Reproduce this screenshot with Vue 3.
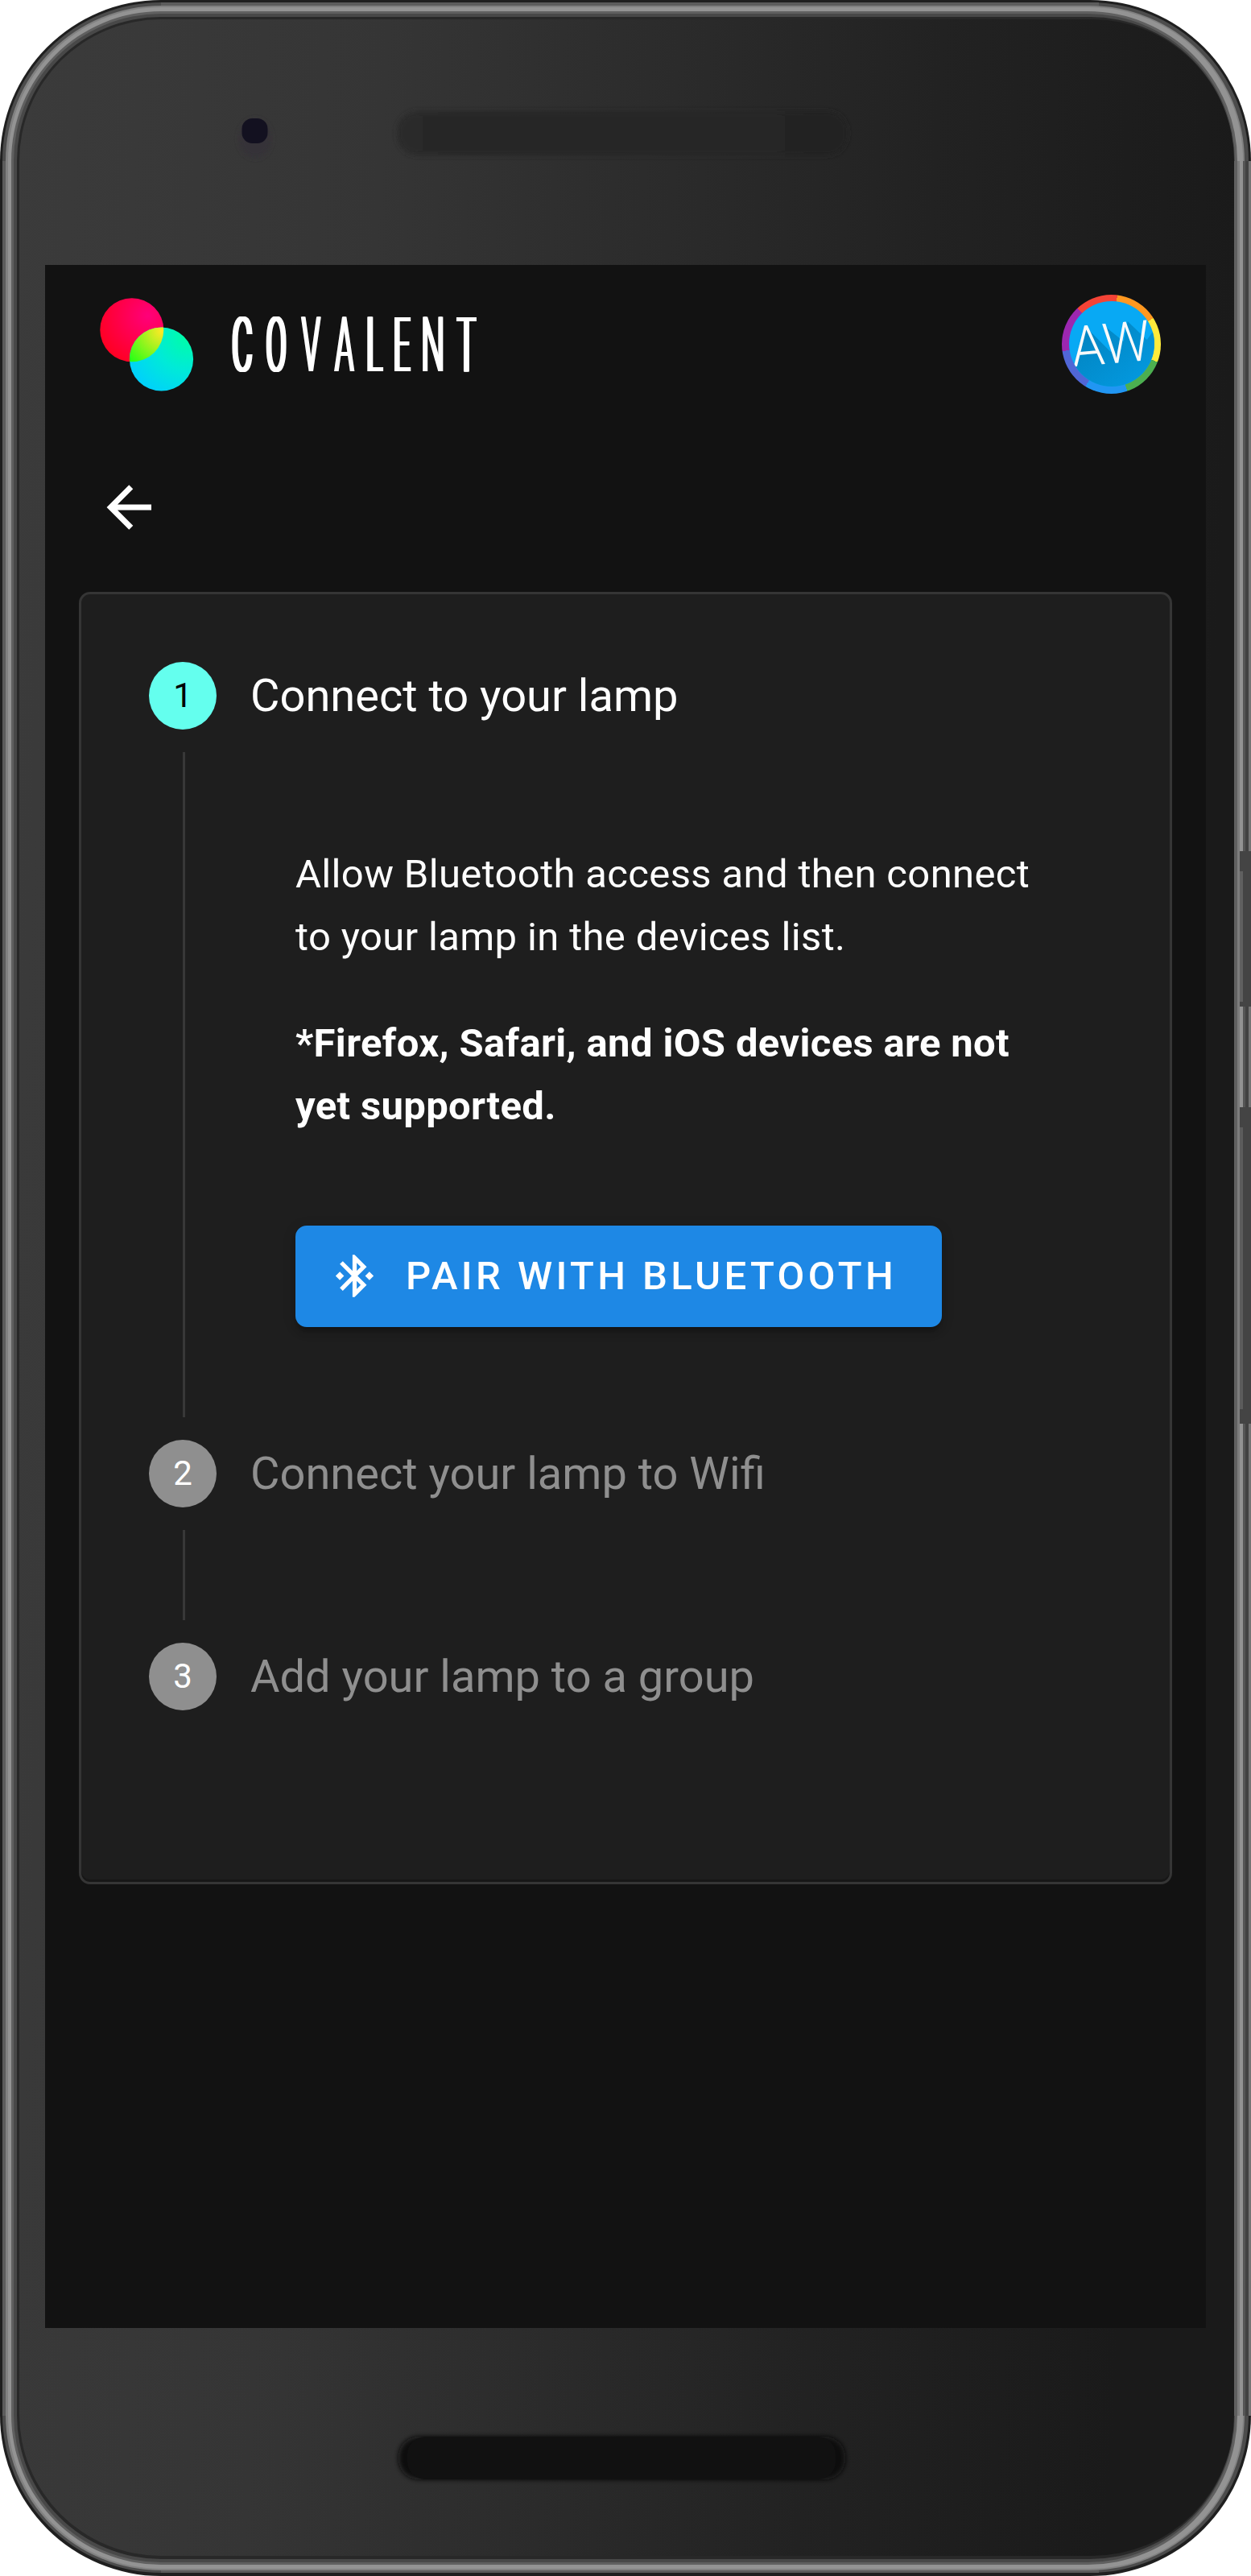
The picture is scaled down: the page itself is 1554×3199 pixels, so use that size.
<script setup>
const brand = [
  { ch: 'C', w: 25, gap: 18, k: 0.405, heavy: true },
  { ch: 'O', w: 25, gap: 18, k: 0.385, heavy: true },
  { ch: 'V', w: 25, gap: 16, k: 0.39 },
  { ch: 'A', w: 25, gap: 15, k: 0.39 },
  { ch: 'L', w: 20, gap: 14, k: 0.385, heavy: true },
  { ch: 'E', w: 20, gap: 16, k: 0.375, heavy: true },
  { ch: 'N', w: 26, gap: 15, k: 0.43 },
  { ch: 'T', w: 26, gap: 0, k: 0.39, heavy: true }
]
const pending = [
  { n: 2, title: 'Connect your lamp to Wifi', line: true },
  { n: 3, title: 'Add your lamp to a group', line: false }
]
</script>

<template>
  <div class="device">
    <svg class="shell" width="1554" height="3199" viewBox="0 0 1554 3199" aria-hidden="true">
      <defs>
        <linearGradient id="body" x1="0" y1="0" x2="1" y2="0.12">
          <stop offset="0" stop-color="#3b3b3b" />
          <stop offset="0.3" stop-color="#353535" />
          <stop offset="0.75" stop-color="#222222" />
          <stop offset="1" stop-color="#1a1a1a" />
        </linearGradient>
        <linearGradient id="speaker" x1="0" y1="0" x2="1" y2="0">
          <stop offset="0" stop-color="#292929" />
          <stop offset="1" stop-color="#242424" />
        </linearGradient>
        <filter id="soft" filterUnits="userSpaceOnUse" x="0" y="0" width="1554" height="3199"><feGaussianBlur stdDeviation="3" /></filter>
      </defs>
      <rect width="1554" height="3199" rx="200" fill="#1f1f1f" />
      <rect x="3" y="3" width="1548" height="3192" rx="197" fill="#4c4c4c" />
      <rect x="7" y="7" width="1539" height="3185" rx="193" fill="#818181" />
      <rect x="10" y="9" width="1534" height="3181" rx="190" fill="#939393" />
      <rect x="14" y="14" width="1523" height="3171" rx="186" fill="#606060" />
      <rect x="17" y="17" width="1517" height="3165" rx="183" fill="#484848" />
      <rect x="21" y="21" width="1512" height="3157" rx="179" fill="#282828" />
      <rect x="24" y="24" width="1509" height="3150" rx="176" fill="url(#body)" />
      <rect x="200" y="3" width="1165" height="4" fill="#5c5c5c" />
      <rect x="200" y="3192" width="1165" height="3" fill="#5c5c5c" />
      <rect x="3" y="200" width="4" height="2800" fill="#5c5c5c" />
      <rect x="1533" y="200" width="4" height="2800" fill="#606060" />
      <rect x="1537" y="200" width="3" height="2800" fill="#7d7d7d" />
      <rect x="1544" y="200" width="3" height="2800" fill="#555555" />
      <rect x="1547" y="200" width="4" height="2800" fill="#424242" />
      <rect x="1551" y="200" width="3" height="2800" fill="#747474" />
      <g>
        <rect x="1540" y="1057" width="14" height="193" fill="#444444" />
        <rect x="1540" y="1082" width="4" height="162" fill="#606060" />
        <rect x="1540" y="1375" width="14" height="393" fill="#444444" />
        <rect x="1540" y="1400" width="4" height="350" fill="#5c5c5c" />
      </g>
      <ellipse cx="317" cy="172" rx="20" ry="24" fill="#343338" filter="url(#soft)" />
      <rect x="300.5" y="147" width="32" height="31" rx="13" fill="#131120" />
      <rect x="493" y="138" width="560" height="55" rx="26" fill="url(#speaker)" filter="url(#soft)" />
      <rect x="495" y="3026" width="555" height="53" rx="25" fill="#101010" filter="url(#soft)" />
      <rect x="506" y="3026" width="532" height="53" rx="22" fill="#111111" />
    </svg>

    <main class="screen">
      <header class="bar">
        <svg class="logo" width="117" height="117" viewBox="124 370 117 117">
          <defs>
            <radialGradient id="pink" gradientUnits="userSpaceOnUse" cx="184" cy="392" r="66">
              <stop offset="0" stop-color="#ff007a" />
              <stop offset="1" stop-color="#ff0022" />
            </radialGradient>
            <radialGradient id="cyan" gradientUnits="userSpaceOnUse" cx="234" cy="416" r="88">
              <stop offset="0" stop-color="#00ffa4" />
              <stop offset="0.5" stop-color="#00ead8" />
              <stop offset="1" stop-color="#00ceff" />
            </radialGradient>
            <radialGradient id="mix" gradientUnits="userSpaceOnUse" cx="201" cy="411" r="52">
              <stop offset="0" stop-color="#ffe926" />
              <stop offset="1" stop-color="#2bff16" />
            </radialGradient>
            <clipPath id="pinkClip"><circle cx="163.8" cy="409.7" r="39.5" /></clipPath>
          </defs>
          <circle cx="163.8" cy="409.7" r="39.5" fill="url(#pink)" />
          <circle cx="200.5" cy="446" r="39.6" fill="url(#cyan)" />
          <circle cx="200.5" cy="446" r="39.6" fill="url(#mix)" clip-path="url(#pinkClip)" />
        </svg>
        <div class="brand">
          <span v-for="(l, i) in brand" :key="i" class="slot" :style="{ width: l.w + 'px', marginRight: l.gap + 'px' }"><span class="glyph" :class="{ heavy: l.heavy }" :style="{ transform: `scaleX(${l.k})` }">{{ l.ch }}</span></span>
        </div>
        <div class="avatar">
          <svg width="106" height="106" viewBox="1327.3 374 106 106">
            <defs>
              <clipPath id="face"><circle cx="1380.3" cy="427" r="53" /></clipPath>
              <linearGradient id="cast" gradientUnits="userSpaceOnUse" x1="1350" y1="410" x2="1405" y2="480">
                <stop offset="0" stop-color="#0285c2" />
                <stop offset="1" stop-color="#0398de" />
              </linearGradient>
            </defs>
            <g clip-path="url(#face)">
              <rect x="1327" y="374" width="107" height="107" fill="#08a9f4" />
              <path d="M1347 405L1378 436L1385 440L1369 403L1395 424L1400 399L1424 422L1440 400V490H1327V456L1334 452Z" fill="url(#cast)" />
              <text class="initials" x="0" y="0" transform="translate(1332 455.5) rotate(-5)" textLength="98" lengthAdjust="spacingAndGlyphs">AW</text>
            </g>
          </svg>
        </div>
      </header>

      <nav class="back">
        <svg width="84" height="84" viewBox="0 0 24 24" fill="#fff"><path d="M20,11V13H8L13.5,18.5L12.08,19.92L4.16,12L12.08,4.08L13.5,5.5L8,11H20Z" /></svg>
      </nav>

      <section class="card">
        <div class="step">
          <span class="num active">1</span>
          <span class="title on">Connect to your lamp</span>
        </div>
        <div class="content">
          <div class="rail"></div>
          <div class="copy">
            <p>Allow Bluetooth access and then connect<br>to your lamp in the devices list.</p>
            <p class="strong">*Firefox, Safari, and iOS devices are not<br>yet supported.</p>
            <button class="pair" type="button">
              <svg width="63" height="63" viewBox="0 0 24 24" fill="#fff"><path d="M19,10L17,12L19,14L21,12M14.88,16.29L13,18.17V14.41M13,5.83L14.88,7.71L13,9.58M17.71,7.71L12,2H11V9.58L6.41,5L5,6.41L10.59,12L5,17.58L6.41,19L11,14.41V22H12L17.71,16.29L13.41,12M7,12L5,10L3,12L5,14L7,12Z" /></svg>
              <span>PAIR WITH BLUETOOTH</span>
            </button>
          </div>
        </div>
        <template v-for="s in pending" :key="s.n">
          <div class="step">
            <span class="num">{{ s.n }}</span>
            <span class="title">{{ s.title }}</span>
          </div>
          <div v-if="s.line" class="link"></div>
        </template>
      </section>
    </main>
  </div>
</template>

<style>
body { margin: 0; background: #fff; }
</style>

<style scoped>
.device {
  position: relative;
  box-sizing: border-box;
  width: 1554px;
  height: 3199px;
  padding: 329px 56px 308px;
  overflow: hidden;
  font-family: Roboto, sans-serif;
  color: #fff;
}
.shell { position: absolute; left: 0; top: 0; }
.screen {
  position: relative;
  box-sizing: border-box;
  height: 2562px;
  padding: 0 42px;
  background: #121212;
}
.bar { display: flex; align-items: center; height: 196px; padding: 0 14px 0 26px; }
.logo { display: block; margin-top: 2px; }
.brand { display: flex; margin: 4px 0 0 47px; height: 96px; }
.slot { display: flex; justify-content: center; }
.glyph {
  flex: none;
  font-size: 95px;
  line-height: 96px;
  font-weight: 300;
  text-shadow: 2px 0 #fff, 4px 0 #fff, -2px 0 #fff, -4px 0 #fff;
}
.glyph.heavy { text-shadow: 2px 0 #fff, 4px 0 #fff, 6px 0 #fff, -2px 0 #fff, -4px 0 #fff, -6px 0 #fff; }
.avatar {
  display: flex;
  align-items: center;
  justify-content: center;
  width: 123px;
  height: 123px;
  margin-left: auto;
  border-radius: 50%;
  background: conic-gradient(#f44336 0 7deg, #ff9820 7deg 58deg, #ffeb3b 58deg 111deg, #4caf50 111deg 161deg, #2196f3 161deg 211.5deg, #5066d6 211.5deg 262deg, #9c27b0 262deg 317deg, #f44336 317deg);
}
.initials { font-family: Roboto, sans-serif; font-size: 70px; font-weight: 300; fill: #fafafa; }
.back { height: 147px; padding: 63px 0 0 20px; box-sizing: border-box; margin-bottom: 63px; }
.back svg { display: block; }
.card {
  box-sizing: border-box;
  height: 1605px;
  border: 3px solid #353535;
  border-radius: 14px;
  background: #1e1e1e;
  box-shadow: inset 0 -3px #171717;
}
.step { display: flex; align-items: center; gap: 42px; height: 84px; padding: 84px 84px 0; }
.num {
  width: 84px;
  height: 84px;
  border-radius: 50%;
  background: #8f8f8f;
  font-size: 42px;
  line-height: 84px;
  text-align: center;
}
.num.active { background: #64ffee; color: #000; }
.title { font-size: 56px; line-height: 56px; color: #8f8f8f; white-space: nowrap; }
.title.on { color: #fff; }
.content { display: flex; height: 826px; margin: 28px 0 -56px 126px; }
.rail { flex: none; width: 3px; background: #383838; }
.copy { padding: 113px 0 0 137px; }
.copy p { margin: 0 0 53px; font-size: 49px; line-height: 78.4px; letter-spacing: 0.35px; white-space: nowrap; }
.copy .strong { font-weight: 700; margin-bottom: 108px; }
.pair {
  display: flex;
  align-items: center;
  gap: 32px;
  box-sizing: border-box;
  width: 803px;
  height: 126px;
  padding: 0 0 0 42px;
  border: 0;
  border-radius: 14px;
  background: #1e88e5;
  color: #fff;
  font: 500 49px/56px Roboto, sans-serif;
  letter-spacing: 4.375px;
  white-space: nowrap;
  box-shadow: 0 10px 4px -7px rgba(0, 0, 0, 0.2), 0 7px 7px rgba(0, 0, 0, 0.14), 0 3px 17px rgba(0, 0, 0, 0.12);
}
.link { width: 3px; height: 112px; margin: 28px 0 -56px 126px; background: #383838; }
</style>
